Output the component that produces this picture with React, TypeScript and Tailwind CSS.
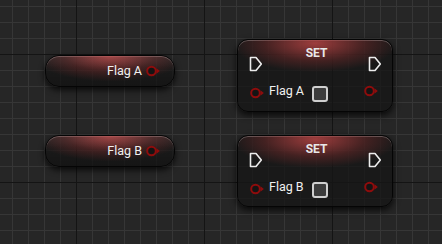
import React from "react";

const font = { fontFamily: "Roboto, 'Noto Sans', sans-serif" };

function DataPin({ className = "" }: { className?: string }) {
  return (
    <svg width="15" height="12" viewBox="0 0 15 12" className={className}>
      <circle cx="5.5" cy="6" r="4.3" fill="#141414" stroke="#8e0c0c" strokeWidth="2" />
      <path d="M10.5 3.2 L13.8 6 L10.5 8.8 Z" fill="#8e0c0c" />
    </svg>
  );
}

function ExecPin({ className = "" }: { className?: string }) {
  return (
    <svg width="14" height="16" viewBox="0 0 14 16" className={className}>
      <path
        d="M1.5 1.5 L7 1.5 L12.3 8 L7 14.5 L1.5 14.5 Z"
        fill="none"
        stroke="#ececec"
        strokeWidth="1.6"
        strokeLinejoin="round"
      />
    </svg>
  );
}

function Getter({ label, top }: { label: string; top: string }) {
  return (
    <div
      className={`absolute left-[45px] ${top} w-[130px] h-[32px] rounded-[14px] border border-[#050505] bg-[rgba(22,22,22,0.72)] shadow-[0_3px_6px_rgba(0,0,0,0.75),inset_0_1px_0_rgba(255,255,255,0.3)] overflow-hidden`}
    >
      <div className="absolute inset-0 bg-[radial-gradient(ellipse_70%_100%_at_50%_0%,rgba(190,70,70,0.8),rgba(130,45,45,0.4)_50%,transparent_85%)]" />
      <div className="absolute inset-0 bg-[linear-gradient(to_bottom,rgba(255,255,255,0.06),transparent_40%,rgba(0,0,0,0.2))]" />
      <div className="relative h-full flex items-center justify-end pr-[13px] gap-[4px]">
        <span className="text-[12.5px] leading-[14px] text-[#f0f0f0]" style={font}>
          {label}
        </span>
        <DataPin />
      </div>
    </div>
  );
}

function SetNode({ label, top, h }: { label: string; top: string; h: string }) {
  return (
    <div
      className={`absolute left-[237px] ${top} w-[156px] ${h} rounded-[11px] border border-[#050505] bg-[rgba(22,22,22,0.78)] shadow-[0_3px_7px_rgba(0,0,0,0.8),inset_0_1px_0_rgba(255,255,255,0.3)] overflow-hidden`}
    >
      <div className="absolute left-0 right-0 top-0 h-[32px] bg-[radial-gradient(ellipse_60%_100%_at_50%_10%,rgba(190,70,70,0.8),rgba(130,45,45,0.4)_55%,transparent_90%)]" />
      <div className="relative flex flex-col h-full">
        <div className="flex justify-between items-start h-[31px] px-[11px]">
          <ExecPin className="mt-[16px]" />
          <span
            className="pt-[7px] text-[12px] leading-[13px] font-bold text-[#e8e8e8] ml-[2px]"
            style={font}
          >
            SET
          </span>
          <ExecPin className="mt-[16px] mr-[-1px]" />
        </div>
        <div className="flex items-center h-[20px] mt-[10px] pl-[12px] pr-[13px]">
          <DataPin className="mt-[4px]" />
          <span className="ml-[4px] text-[12.5px] leading-[14px] text-[#f0f0f0]" style={font}>
            {label}
          </span>
          <div className="ml-[8px] mt-[6px] w-[16px] h-[16px] rounded-[3px] border-2 border-[#cfcfcf] bg-[#3c3c3c]" />
          <div className="flex-1" />
          <DataPin className="mt-[-1px]" />
        </div>
      </div>
    </div>
  );
}

export default function App() {
  return (
    <div className="relative w-[442px] h-[244px] overflow-hidden bg-[#262626] [background-image:linear-gradient(to_right,#141414_1px,transparent_1px),linear-gradient(to_bottom,#141414_1px,transparent_1px),linear-gradient(to_right,#363636_1px,transparent_1px),linear-gradient(to_bottom,#363636_1px,transparent_1px)] [background-size:128px_128px,128px_128px,16px_16px,16px_16px] [background-position:76px_54px,76px_54px,12px_6px,12px_6px]">
      <Getter label="Flag A" top="top-[55px]" />
      <Getter label="Flag B" top="top-[135px]" />
      <SetNode label="Flag A" top="top-[39px]" h="h-[73px]" />
      <SetNode label="Flag B" top="top-[135px]" h="h-[72px]" />
    </div>
  );
}
